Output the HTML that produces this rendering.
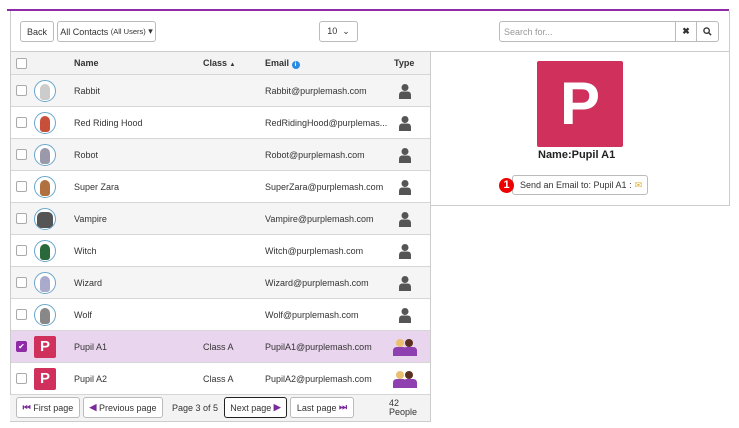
<!DOCTYPE html>
<html><head><meta charset="utf-8"><style>
*{box-sizing:border-box;margin:0;padding:0}
body{width:739px;height:428px;background:#fff;font-family:"Liberation Sans",sans-serif;font-size:9px;color:#333;position:relative;overflow:hidden}
.a{position:absolute}
.btn{position:absolute;border:1px solid #bbb;border-radius:3px;background:#fff;font-size:9px;display:flex;align-items:center;justify-content:center;color:#333}
.row{position:absolute;left:11px;width:419px;height:32px;border-bottom:1px solid #d6d6d6}
.row span{position:absolute;top:11px}
.cb{position:absolute;left:5px;top:10px;width:11px;height:11px;border:1px solid #aaa;border-radius:2px;background:#fff}
.av{position:absolute;left:23px;top:5px;width:22px;height:22px;border-radius:50%;border:1.5px solid #6aa6cc;background:#fff;overflow:hidden}
.av i{position:absolute;left:5px;top:3px;width:10px;height:16px;border-radius:5px 5px 3px 3px}
.pr{position:absolute;left:388px;top:8px}
.pb{position:absolute;left:23px;top:5px;width:22px;height:22px;border-radius:2px;background:#d0305c;color:#fff;font-weight:bold;font-size:15px;text-align:center;line-height:22px}
</style></head><body>
<div class="a" style="left:7px;top:9px;width:722px;height:2px;background:#8e2ba6"></div>
<div class="a" style="left:10px;top:11px;width:1px;height:411px;background:#ccc"></div>
<div class="a" style="left:729px;top:11px;width:1px;height:195px;background:#ccc"></div>
<div class="a" style="left:430px;top:51px;width:1px;height:371px;background:#ccc"></div>
<div class="a" style="left:10px;top:51px;width:720px;height:1px;background:#ccc"></div>
<div class="a" style="left:430px;top:205px;width:300px;height:1px;background:#ccc"></div>
<div class="btn" style="left:20px;top:21px;width:34px;height:21px">Back</div>
<div class="btn" style="left:57px;top:21px;width:99px;height:21px">All Contacts&nbsp;<span style="font-size:7.5px">(All Users)</span>&nbsp;▾</div>
<div class="btn" style="left:319px;top:21px;width:39px;height:21px">10&nbsp;&nbsp;⌄</div>
<div class="btn" style="left:499px;top:21px;width:177px;height:21px;justify-content:flex-start;padding-left:4px;color:#999;border-radius:3px 0 0 3px">Search for...</div>
<div class="btn" style="left:675px;top:21px;width:22px;height:21px;border-radius:0;font-weight:bold">✖</div>
<div class="btn" style="left:696px;top:21px;width:23px;height:21px;border-radius:0 3px 3px 0"><svg width="9" height="9" viewBox="0 0 10 10"><circle cx="4" cy="4" r="3" fill="none" stroke="#333" stroke-width="1.5"/><path d="M6 6l3 3" stroke="#333" stroke-width="1.6"/></svg></div>
<div class="row" style="top:52px;height:23px;background:#f3f3f3;font-weight:bold">
<div class="cb" style="top:6px"></div>
<span style="left:63px;top:6px">Name</span><span style="left:192px;top:6px">Class <span style="font-size:6px;position:static">▲</span></span><span style="left:254px;top:6px">Email <span style="position:static;display:inline-block;width:8px;height:8px;border-radius:50%;background:#2c8be0;color:#fff;font-size:6px;text-align:center;line-height:8px">i</span></span><span style="left:383px;top:6px">Type</span></div>
<div class="row" style="top:75px;background:#f5f5f5"><div class="cb"></div><div class="av"><i style="background:#ccc"></i></div><span style="left:63px">Rabbit</span><span style="left:254px">Rabbit@purplemash.com</span><svg class="pr" width="12" height="16" viewBox="0 0 12 16"><circle cx="6" cy="4.5" r="3.5" fill="#555"/><path d="M0 16v-4q0-3 3-3.5h6q3 .5 3 3.5v4z" fill="#555"/></svg></div>
<div class="row" style="top:107px;background:#fff"><div class="cb"></div><div class="av"><i style="background:#c8503a"></i></div><span style="left:63px">Red Riding Hood</span><span style="left:254px">RedRidingHood@purplemas...</span><svg class="pr" width="12" height="16" viewBox="0 0 12 16"><circle cx="6" cy="4.5" r="3.5" fill="#555"/><path d="M0 16v-4q0-3 3-3.5h6q3 .5 3 3.5v4z" fill="#555"/></svg></div>
<div class="row" style="top:139px;background:#f5f5f5"><div class="cb"></div><div class="av"><i style="background:#99a"></i></div><span style="left:63px">Robot</span><span style="left:254px">Robot@purplemash.com</span><svg class="pr" width="12" height="16" viewBox="0 0 12 16"><circle cx="6" cy="4.5" r="3.5" fill="#555"/><path d="M0 16v-4q0-3 3-3.5h6q3 .5 3 3.5v4z" fill="#555"/></svg></div>
<div class="row" style="top:171px;background:#fff"><div class="cb"></div><div class="av"><i style="background:#b07040"></i></div><span style="left:63px">Super Zara</span><span style="left:254px">SuperZara@purplemash.com</span><svg class="pr" width="12" height="16" viewBox="0 0 12 16"><circle cx="6" cy="4.5" r="3.5" fill="#555"/><path d="M0 16v-4q0-3 3-3.5h6q3 .5 3 3.5v4z" fill="#555"/></svg></div>
<div class="row" style="top:203px;background:#f5f5f5"><div class="cb"></div><div class="av"><i style="background:#555;width:16px;left:2px"></i></div><span style="left:63px">Vampire</span><span style="left:254px">Vampire@purplemash.com</span><svg class="pr" width="12" height="16" viewBox="0 0 12 16"><circle cx="6" cy="4.5" r="3.5" fill="#555"/><path d="M0 16v-4q0-3 3-3.5h6q3 .5 3 3.5v4z" fill="#555"/></svg></div>
<div class="row" style="top:235px;background:#fff"><div class="cb"></div><div class="av"><i style="background:#2a6a3a"></i></div><span style="left:63px">Witch</span><span style="left:254px">Witch@purplemash.com</span><svg class="pr" width="12" height="16" viewBox="0 0 12 16"><circle cx="6" cy="4.5" r="3.5" fill="#555"/><path d="M0 16v-4q0-3 3-3.5h6q3 .5 3 3.5v4z" fill="#555"/></svg></div>
<div class="row" style="top:267px;background:#f5f5f5"><div class="cb"></div><div class="av"><i style="background:#aac"></i></div><span style="left:63px">Wizard</span><span style="left:254px">Wizard@purplemash.com</span><svg class="pr" width="12" height="16" viewBox="0 0 12 16"><circle cx="6" cy="4.5" r="3.5" fill="#555"/><path d="M0 16v-4q0-3 3-3.5h6q3 .5 3 3.5v4z" fill="#555"/></svg></div>
<div class="row" style="top:299px;background:#fff"><div class="cb"></div><div class="av"><i style="background:#888"></i></div><span style="left:63px">Wolf</span><span style="left:254px">Wolf@purplemash.com</span><svg class="pr" width="12" height="16" viewBox="0 0 12 16"><circle cx="6" cy="4.5" r="3.5" fill="#555"/><path d="M0 16v-4q0-3 3-3.5h6q3 .5 3 3.5v4z" fill="#555"/></svg></div>
<div class="row" style="top:331px;background:#ead5ee"><div class="cb" style="background:#8e2ba6;border-color:#8e2ba6;color:#fff;font-size:8px;line-height:9px;text-align:center">✔</div><div class="pb">P</div><span style="left:63px">Pupil A1</span><span style="left:192px">Class A</span><span style="left:254px">PupilA1@purplemash.com</span><svg class="a" style="left:382px;top:7px" width="24" height="18" viewBox="0 0 24 18"><circle cx="7" cy="5" r="4" fill="#e8c070"/><path d="M0 18v-5q0-4 4-4h6q3 0 3 4v5z" fill="#8e3fb0"/><circle cx="16" cy="5" r="4" fill="#5a3020"/><path d="M10 18v-5q0-4 4-4h6q4 0 4 4v5z" fill="#8e3fb0"/></svg></div>
<div class="row" style="top:363px;background:#fff"><div class="cb"></div><div class="pb">P</div><span style="left:63px">Pupil A2</span><span style="left:192px">Class A</span><span style="left:254px">PupilA2@purplemash.com</span><svg class="a" style="left:382px;top:7px" width="24" height="18" viewBox="0 0 24 18"><circle cx="7" cy="5" r="4" fill="#e8c070"/><path d="M0 18v-5q0-4 4-4h6q3 0 3 4v5z" fill="#8e3fb0"/><circle cx="16" cy="5" r="4" fill="#5a3020"/><path d="M10 18v-5q0-4 4-4h6q4 0 4 4v5z" fill="#8e3fb0"/></svg></div>
<div class="a" style="left:10px;top:395px;width:420px;height:27px;background:#f3f3f3;border-bottom:1px solid #ccc"></div>
<div class="btn" style="left:16px;top:397px;width:64px;height:21px"><b style="color:#7a2a9a">⏮</b>&nbsp;First page</div>
<div class="btn" style="left:83px;top:397px;width:80px;height:21px"><b style="color:#7a2a9a">◀</b>&nbsp;Previous page</div>
<div class="a" style="left:172px;top:403px">Page 3 of 5</div>
<div class="btn" style="left:224px;top:397px;width:63px;height:21px;border:1.5px solid #222">Next page&nbsp;<b style="color:#7a2a9a">▶</b></div>
<div class="btn" style="left:290px;top:397px;width:64px;height:21px">Last page&nbsp;<b style="color:#7a2a9a">⏭</b></div>
<div class="a" style="left:389px;top:399px;line-height:9px">42<br>People</div>
<div class="a" style="left:537px;top:61px;width:86px;height:86px;background:#d0305c;border-radius:2px;color:#fff;font-weight:bold;font-size:60px;text-align:center;line-height:86px">P</div>
<div class="a" style="left:538px;top:149px;font-weight:bold;font-size:11px;color:#222">Name:Pupil A1</div>
<div class="btn" style="left:512px;top:175px;width:136px;height:20px;justify-content:flex-start;padding-left:7px">Send an Email to: Pupil A1 : <span style="color:#e0b030;margin-left:3px">✉</span></div>
<div class="a" style="left:499px;top:178px;width:15px;height:15px;border-radius:50%;background:#e00;color:#fff;font-weight:bold;font-size:11px;text-align:center;line-height:15px">1</div>
</body></html>
